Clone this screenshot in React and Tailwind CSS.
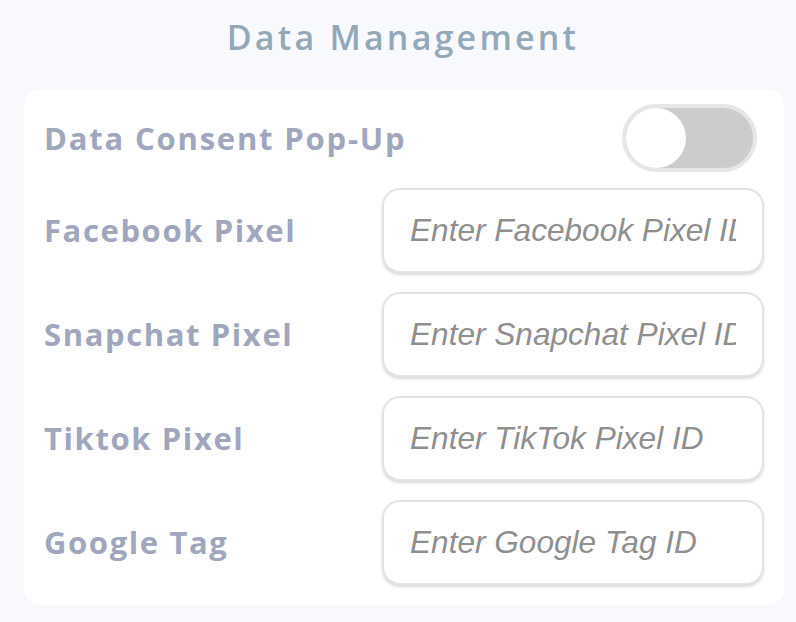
import { useState } from 'react';

const fields = [
  { label: 'Facebook Pixel', placeholder: 'Enter Facebook Pixel ID' },
  { label: 'Snapchat Pixel', placeholder: 'Enter Snapchat Pixel ID' },
  { label: 'Tiktok Pixel', placeholder: 'Enter TikTok Pixel ID' },
  { label: 'Google Tag', placeholder: 'Enter Google Tag ID' },
];

export default function App() {
  const [consent, setConsent] = useState(false);

  return (
    <div className="w-[796px] h-[622px] bg-[#f7f9fd] font-['Open_Sans',sans-serif] overflow-hidden">
      <h1 className="h-[78px] pt-[14px] pl-[10px] text-center text-[34px] font-semibold leading-[46px] tracking-[3.2px] text-[#93a8b8]">Data Management</h1>
      <div className="ml-[24px] mt-[12px] w-[760px] rounded-[16px] bg-white px-[20px] pt-[14px] pb-[20px]">
        <div className="flex h-[68px] items-center justify-between">
          <span className="text-[31px] font-bold tracking-[1.8px] text-[#a0a7bd]">Data Consent Pop-Up</span>
          <button
            onClick={() => setConsent(!consent)}
            className={`mr-[7px] flex h-[68px] w-[135px] items-center rounded-full border-[4px] border-[#e6e6e6] p-0 ${consent ? 'justify-end bg-[#4ade80]' : 'justify-start bg-[#cccccc]'}`}
          >
            <span className="h-[60px] w-[60px] rounded-full bg-white" />
          </button>
        </div>
        <div className="mt-[16px] flex flex-col gap-[19px]">
          {fields.map((f) => (
            <div key={f.label} className="flex h-[85px] items-center justify-between">
              <span className="text-[31px] font-bold tracking-[1.6px] text-[#a0a7bd]">{f.label}</span>
              <input
                placeholder={f.placeholder}
                className="h-[85px] w-[382px] rounded-[18px] border-2 border-[#e3e3e3] bg-white px-[26px] font-['Liberation_Sans',Arial,sans-serif] text-[31.6px] italic text-[#555] shadow-[0_2px_3px_rgba(0,0,0,0.15)] outline-none placeholder:text-[#8f8f8f]"
              />
            </div>
          ))}
        </div>
      </div>
    </div>
  );
}
